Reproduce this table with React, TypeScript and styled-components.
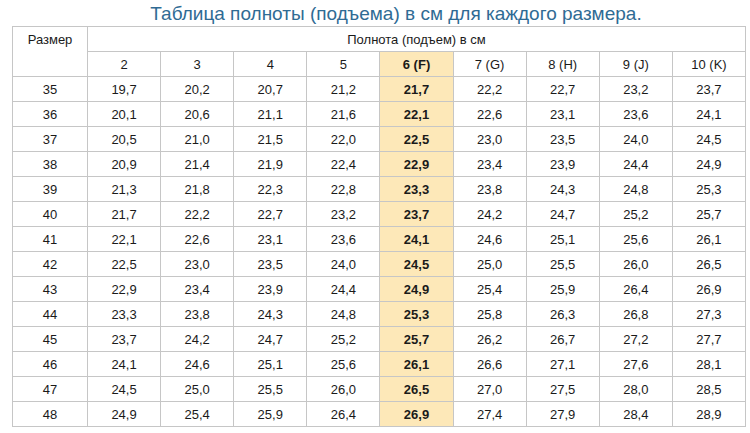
import styled, { createGlobalStyle } from "styled-components";

const GlobalStyle = createGlobalStyle`
  body {
    margin: 0;
    background: #fff;
    font-family: Arial, "Liberation Sans", sans-serif;
  }
`;

const Page = styled.div`
  width: 750px;
  padding-left: 12px;
  box-sizing: border-box;
`;

const Title = styled.h1`
  margin: 0;
  height: 26px;
  padding-left: 30px;
  font-size: 19px;
  font-weight: normal;
  line-height: 28px;
  text-align: center;
  color: #2f6b94;
`;

const Table = styled.table`
  width: 734px;
  border-collapse: collapse;
  table-layout: fixed;
  font-size: 13px;
  color: #1a1a1a;
`;

const Cell = styled.td<{ $hl?: boolean }>`
  height: 24px;
  padding: 0;
  border: 1px solid #c6c6c6;
  text-align: center;
  vertical-align: middle;
  background: ${(p) => (p.$hl ? "#fde8b8" : "#fff")};
  font-weight: ${(p) => (p.$hl ? "bold" : "normal")};
`;

const SizeHead = styled(Cell)`
  vertical-align: top;
  padding-top: 5px;
`;

const sizes = [35, 36, 37, 38, 39, 40, 41, 42, 43, 44, 45, 46, 47, 48];
const widths = ["2", "3", "4", "5", "6 (F)", "7 (G)", "8 (H)", "9 (J)", "10 (K)"];
const HL = 4;

const fmt = (tenths: number) => (tenths / 10).toFixed(1).replace(".", ",");

export default function App() {
  return (
    <Page>
      <GlobalStyle />
      <Title>Таблица полноты (подъема) в см для каждого размера.</Title>
      <Table>
        <colgroup>
          <col style={{ width: 75 }} />
          {widths.map((w) => (
            <col key={w} />
          ))}
        </colgroup>
        <thead>
          <tr>
            <SizeHead as="th" rowSpan={2} style={{ fontWeight: "normal" }}>
              Размер
            </SizeHead>
            <Cell colSpan={9}>Полнота (подъем) в см</Cell>
          </tr>
          <tr>
            {widths.map((w, j) => (
              <Cell key={w} $hl={j === HL}>
                {w}
              </Cell>
            ))}
          </tr>
        </thead>
        <tbody>
          {sizes.map((s, i) => (
            <tr key={s}>
              <Cell>{s}</Cell>
              {widths.map((w, j) => (
                <Cell key={w} $hl={j === HL}>
                  {fmt(197 + 4 * i + 5 * j)}
                </Cell>
              ))}
            </tr>
          ))}
        </tbody>
      </Table>
    </Page>
  );
}
